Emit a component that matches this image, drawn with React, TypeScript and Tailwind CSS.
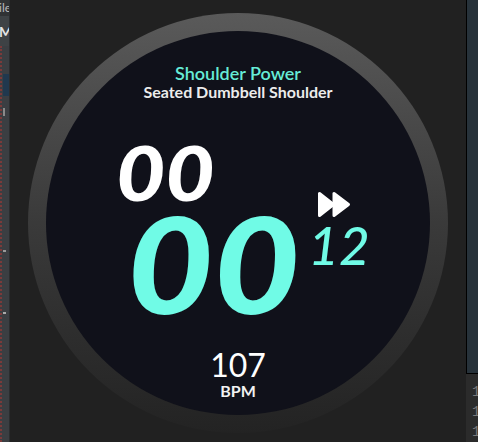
import React from 'react';

const FastForward: React.FC = () => (
  <svg width="34" height="27" viewBox="0 0 34 27" fill="white" stroke="white" strokeWidth="3" strokeLinejoin="round">
    <path d="M2.5 2.5 L2.5 24.5 L16.5 13.5 Z" />
    <path d="M17 2.5 L17 24.5 L31.5 13.5 Z" />
  </svg>
);

const LeftStrip: React.FC = () => (
  <div className="flex w-[10px] shrink-0 flex-col overflow-hidden border-r border-[#2b2d2f] bg-[#3b3e42]">
    <div className="flex h-[16px] overflow-hidden bg-[#303234] pt-[1px] text-[12px] leading-[13px] text-[#b9b9b9]">
      <span className="-ml-[1px]">ile</span>
    </div>
    <div className="flex h-[30px] items-center overflow-hidden bg-[#3e4245] text-[14px] font-bold text-[#e6e6e6]">
      <span className="-ml-[1px]">M</span>
    </div>
    <div className="flex flex-1 flex-row">
      <div className="w-[3px] border-l-2 border-dotted border-[#7a3a3a]" />
      <div className="flex flex-1 flex-col pt-[28px]">
        <div className="h-[22px] bg-[#20384e]" />
        <div className="mt-[12px] h-[8px] w-[2px] bg-[#8a8a8a]" />
        <div className="mt-[134px] h-[2px] w-[3px] bg-[#9a9a9a]" />
        <div className="mt-[60px] h-[2px] w-[3px] bg-[#aaaaaa]" />
      </div>
    </div>
  </div>
);

const RightStrip: React.FC = () => (
  <div className="flex w-[12px] shrink-0 flex-col">
    <div className="h-[376px] border-b border-l border-black bg-[#27323a]" />
    <div className="flex flex-1 flex-col bg-[#2b2b2b] pl-[6px] pt-[8px] font-['Liberation_Mono',monospace] text-[14px] leading-[20px] text-[#7a7a7a]">
      <span>1</span>
      <span>1</span>
      <span>1</span>
    </div>
  </div>
);

export default function App() {
  return (
    <div className="flex h-[442px] w-[478px] flex-row overflow-hidden bg-[#212121] font-['Lato',sans-serif]">
      <LeftStrip />
      <div className="flex flex-1 justify-center">
        <div className="mt-[13px] h-[420px] w-[420px] rounded-full bg-linear-to-b from-[#5a5a5a] via-[#3a3a3a] to-[#232323] p-[18px]">
          <div className="flex h-[384px] w-[384px] flex-col items-center overflow-hidden rounded-full bg-[#10111a] pt-[33px]">
            <div className="text-[18px] font-semibold leading-[19px] text-[#66ecd7]">Shoulder Power</div>
            <div className="text-[16px] font-bold leading-[18px] text-[#ececec]">Seated Dumbbell Shoulder</div>

            <div className="mt-[43px] flex flex-row self-start pl-[70px]">
              <div className="flex flex-col">
                <div className="origin-left scale-x-[1.12] text-[76px] font-black italic leading-[56px] text-white">00</div>
                <div className="ml-[11px] mt-[13px] origin-left scale-x-[1.12] text-[133px] font-black italic leading-[100px] text-[#70fbe6]">00</div>
              </div>
              <div className="ml-[27px] flex flex-col pt-[47px]">
                <div className="ml-[9px]">
                  <FastForward />
                </div>
                <div className="mt-[5px] text-[53px] font-medium italic leading-[44px] text-[#70fbe6]">12</div>
              </div>
            </div>

            <div className="mt-[36px] text-[32px] leading-[32px] text-white">107</div>
            <div className="mt-[2px] text-[16px] font-bold leading-[16px] text-[#f2f2f2]">BPM</div>
          </div>
        </div>
      </div>
      <RightStrip />
    </div>
  );
}
